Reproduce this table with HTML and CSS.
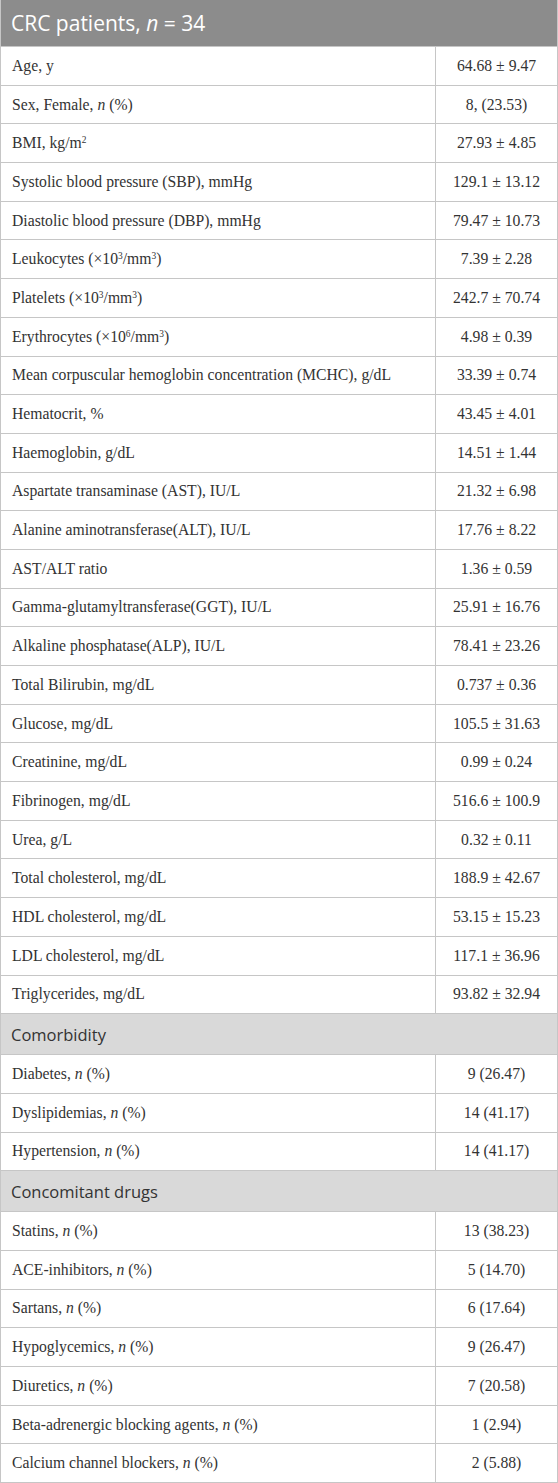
FILE: index.html
```html
<!DOCTYPE html>
<html>
<head>
<meta charset="utf-8">
<link rel="stylesheet" href="styles.css">
</head>
<body>
<div class="table">
  <div class="title"><span>CRC patients, <i>n</i> = 34</span></div>
  <div class="row"><div class="lab"><span>Age, y</span></div><div class="val"><span>64.68 ± 9.47</span></div></div>
  <div class="row"><div class="lab"><span>Sex, Female, <i>n</i> (%)</span></div><div class="val"><span>8, (23.53)</span></div></div>
  <div class="row"><div class="lab"><span>BMI, kg/m<sup>2</sup></span></div><div class="val"><span>27.93 ± 4.85</span></div></div>
  <div class="row"><div class="lab"><span>Systolic blood pressure (SBP), mmHg</span></div><div class="val"><span>129.1 ± 13.12</span></div></div>
  <div class="row"><div class="lab"><span>Diastolic blood pressure (DBP), mmHg</span></div><div class="val"><span>79.47 ± 10.73</span></div></div>
  <div class="row"><div class="lab"><span>Leukocytes (×10<sup>3</sup>/mm<sup>3</sup>)</span></div><div class="val"><span>7.39 ± 2.28</span></div></div>
  <div class="row"><div class="lab"><span>Platelets (×10<sup>3</sup>/mm<sup>3</sup>)</span></div><div class="val"><span>242.7 ± 70.74</span></div></div>
  <div class="row"><div class="lab"><span>Erythrocytes (×10<sup>6</sup>/mm<sup>3</sup>)</span></div><div class="val"><span>4.98 ± 0.39</span></div></div>
  <div class="row"><div class="lab"><span>Mean corpuscular hemoglobin concentration (MCHC), g/dL</span></div><div class="val"><span>33.39 ± 0.74</span></div></div>
  <div class="row"><div class="lab"><span>Hematocrit, %</span></div><div class="val"><span>43.45 ± 4.01</span></div></div>
  <div class="row"><div class="lab"><span>Haemoglobin, g/dL</span></div><div class="val"><span>14.51 ± 1.44</span></div></div>
  <div class="row"><div class="lab"><span>Aspartate transaminase (AST), IU/L</span></div><div class="val"><span>21.32 ± 6.98</span></div></div>
  <div class="row"><div class="lab"><span>Alanine aminotransferase(ALT), IU/L</span></div><div class="val"><span>17.76 ± 8.22</span></div></div>
  <div class="row"><div class="lab"><span>AST/ALT ratio</span></div><div class="val"><span>1.36 ± 0.59</span></div></div>
  <div class="row"><div class="lab"><span>Gamma-glutamyltransferase(GGT), IU/L</span></div><div class="val"><span>25.91 ± 16.76</span></div></div>
  <div class="row"><div class="lab"><span>Alkaline phosphatase(ALP), IU/L</span></div><div class="val"><span>78.41 ± 23.26</span></div></div>
  <div class="row"><div class="lab"><span>Total Bilirubin, mg/dL</span></div><div class="val"><span>0.737 ± 0.36</span></div></div>
  <div class="row"><div class="lab"><span>Glucose, mg/dL</span></div><div class="val"><span>105.5 ± 31.63</span></div></div>
  <div class="row"><div class="lab"><span>Creatinine, mg/dL</span></div><div class="val"><span>0.99 ± 0.24</span></div></div>
  <div class="row"><div class="lab"><span>Fibrinogen, mg/dL</span></div><div class="val"><span>516.6 ± 100.9</span></div></div>
  <div class="row"><div class="lab"><span>Urea, g/L</span></div><div class="val"><span>0.32 ± 0.11</span></div></div>
  <div class="row"><div class="lab"><span>Total cholesterol, mg/dL</span></div><div class="val"><span>188.9 ± 42.67</span></div></div>
  <div class="row"><div class="lab"><span>HDL cholesterol, mg/dL</span></div><div class="val"><span>53.15 ± 15.23</span></div></div>
  <div class="row"><div class="lab"><span>LDL cholesterol, mg/dL</span></div><div class="val"><span>117.1 ± 36.96</span></div></div>
  <div class="row"><div class="lab"><span>Triglycerides, mg/dL</span></div><div class="val"><span>93.82 ± 32.94</span></div></div>
  <div class="section"><span>Comorbidity</span></div>
  <div class="row"><div class="lab"><span>Diabetes, <i>n</i> (%)</span></div><div class="val"><span>9 (26.47)</span></div></div>
  <div class="row"><div class="lab"><span>Dyslipidemias, <i>n</i> (%)</span></div><div class="val"><span>14 (41.17)</span></div></div>
  <div class="row"><div class="lab"><span>Hypertension, <i>n</i> (%)</span></div><div class="val"><span>14 (41.17)</span></div></div>
  <div class="section"><span>Concomitant drugs</span></div>
  <div class="row"><div class="lab"><span>Statins, <i>n</i> (%)</span></div><div class="val"><span>13 (38.23)</span></div></div>
  <div class="row"><div class="lab"><span>ACE-inhibitors, <i>n</i> (%)</span></div><div class="val"><span>5 (14.70)</span></div></div>
  <div class="row"><div class="lab"><span>Sartans, <i>n</i> (%)</span></div><div class="val"><span>6 (17.64)</span></div></div>
  <div class="row"><div class="lab"><span>Hypoglycemics, <i>n</i> (%)</span></div><div class="val"><span>9 (26.47)</span></div></div>
  <div class="row"><div class="lab"><span>Diuretics, <i>n</i> (%)</span></div><div class="val"><span>7 (20.58)</span></div></div>
  <div class="row"><div class="lab"><span>Beta-adrenergic blocking agents, <i>n</i> (%)</span></div><div class="val"><span>1 (2.94)</span></div></div>
  <div class="row"><div class="lab"><span>Calcium channel blockers, <i>n</i> (%)</span></div><div class="val"><span>2 (5.88)</span></div></div>
</div>
</body>
</html>
```
FILE: styles.css
```css
html, body {
  margin: 0;
  padding: 0;
  background: #fff;
}
.table {
  width: 558px;
  height: 1483px;
  box-sizing: border-box;
  border: 1px solid #c6c6c6;
  border-top: none;
  display: flex;
  flex-direction: column;
  font-family: "Liberation Serif", "DejaVu Serif", serif;
  color: #333;
}
.title {
  height: 47px;
  flex: 0 0 47px;
  box-sizing: border-box;
  background: #8c8c8c;
  color: #fff;
  font-family: "Open Sans", "Noto Sans", sans-serif;
  font-size: 21px;
  display: flex;
  align-items: center;
  padding-left: 10px;
  border-bottom: 1px solid #c6c6c6;
}
.section {
  flex: 0 0 41px;
  height: 41px;
  box-sizing: border-box;
  background: #d9d9d9;
  font-family: "Open Sans", "Noto Sans", sans-serif;
  font-size: 16.5px;
  color: #333;
  display: flex;
  align-items: center;
  padding-left: 10px;
  border-bottom: 1px solid #c6c6c6;
}
.row {
  flex: 1 1 0;
  min-height: 0;
  box-sizing: border-box;
  display: flex;
  border-bottom: 1px solid #c6c6c6;
  font-size: 15.7px;
}
.row:last-child {
  border-bottom: none;
}
.lab {
  flex: 0 0 435px;
  box-sizing: border-box;
  border-right: 1px solid #c6c6c6;
  padding-left: 11px;
  display: flex;
  align-items: center;
  white-space: nowrap;
}
.val {
  flex: 1 1 auto;
  display: flex;
  align-items: center;
  justify-content: center;
  white-space: nowrap;
}
sup {
  font-size: 0.6em;
  line-height: 0;
  vertical-align: 0.55em;
}
```
